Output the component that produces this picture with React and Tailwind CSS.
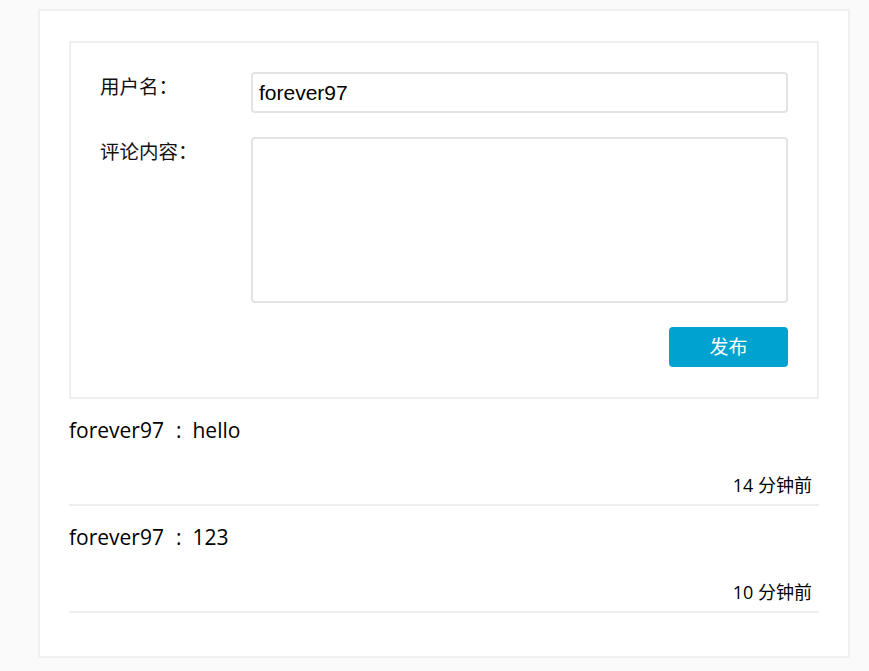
import React, { useState } from 'react';

const comments = [
  { id: 1, user: 'forever97', text: 'hello', time: '14 分钟前' },
  { id: 2, user: 'forever97', text: '123', time: '10 分钟前' },
];

export default function App() {
  const [user, setUser] = useState('forever97');
  const [content, setContent] = useState('');

  return (
    <div className="min-h-[671px] bg-[#fafafa] pt-[9px] pl-[38px]" style={{ fontFamily: '"Open Sans", "Noto Sans CJK SC", sans-serif' }}>
      <div className="w-[812px] h-[649px] bg-white border-2 border-[#f0f0f0] px-[29px] pt-[30px]">
        {/* comment form */}
        <div className="border-2 border-[#efefef] pl-[29px] pr-[29px] pt-[29px] pb-[30px]">
          <div className="flex">
            <label className="w-[151px] text-[19.5px] leading-[28px] pt-[1px] text-[#111]">用户名：</label>
            <input value={user} onChange={e => setUser(e.target.value)}
              className="flex-1 h-[41px] border-2 border-[#e4e4e4] rounded-[4px] px-[6px] text-[21px] text-black outline-none"
              style={{ fontFamily: '"Liberation Sans", Arial, sans-serif' }} />
          </div>
          <div className="flex mt-[24px]">
            <label className="w-[151px] text-[19.5px] leading-[28px] pt-[1px] text-[#111]">评论内容：</label>
            <textarea value={content} onChange={e => setContent(e.target.value)}
              className="flex-1 h-[166px] border-2 border-[#e4e4e4] rounded-[4px] px-[6px] py-[4px] text-[18px] resize-none outline-none" />
          </div>
          <div className="flex justify-end mt-[24px]">
            <button className="w-[119px] h-[40px] rounded-[4px] bg-[#00a3d0] text-white text-[19px]">发布</button>
          </div>
        </div>

        {/* comment list */}
        {comments.map(c => (
          <div key={c.id} className="border-b-2 border-[#eeeeee] pt-[17px] pb-[7px]">
            <p className="text-[21px] leading-[28px] text-black">
              {c.user}<span className="ml-[12px] mr-[11px]">:</span>{c.text}
            </p>
            <div className="flex justify-end mt-[29px] pr-[7px]">
              <span className="text-[18px] leading-[24px] text-black">{c.time}</span>
            </div>
          </div>
        ))}
      </div>
    </div>
  );
}
